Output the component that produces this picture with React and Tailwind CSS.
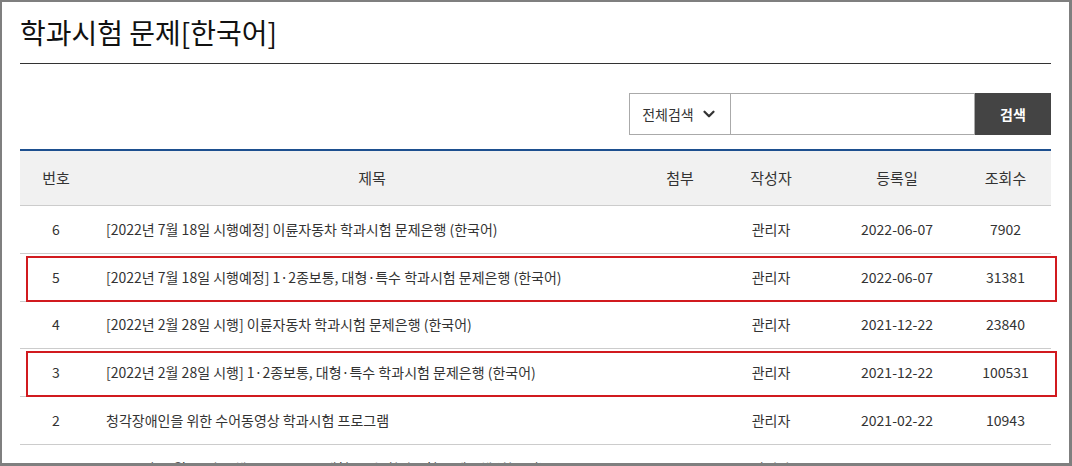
import React from "react";
import { ChevronDown } from "lucide-react";

const rows = [
  { no: 6, title: "[2022년 7월 18일 시행예정] 이륜자동차 학과시험 문제은행 (한국어)", date: "2022-06-07", views: "7902" },
  { no: 5, title: "[2022년 7월 18일 시행예정] 1·2종보통, 대형·특수 학과시험 문제은행 (한국어)", date: "2022-06-07", views: "31381", mark: true },
  { no: 4, title: "[2022년 2월 28일 시행] 이륜자동차 학과시험 문제은행 (한국어)", date: "2021-12-22", views: "23840" },
  { no: 3, title: "[2022년 2월 28일 시행] 1·2종보통, 대형·특수 학과시험 문제은행 (한국어)", date: "2021-12-22", views: "100531", mark: true },
  { no: 2, title: "청각장애인을 위한 수어동영상 학과시험 프로그램", date: "2021-02-22", views: "10943" },
  { no: 1, title: "[2020년 12월 10일 시행] 1·2종보통, 대형·특수 학과시험 문제은행 (한국어)", date: "2020-12-10", views: "98213" },
];

const cols = "grid grid-cols-[72px_560px_56px_126px_126px_91px]";

export default function App() {
  return (
    <div
      className="w-[1072px] h-[466px] overflow-hidden bg-white border-[#7f7f7f] border-t-2 border-l-2 border-r-[3px] border-b-[3px] text-[#333]"
      style={{ fontFamily: '"Noto Sans CJK KR", "Noto Sans", sans-serif' }}
    >
      <div className="pl-[18px] pr-[18px] pt-[12px]">
        {/* title */}
        <h1 className="text-[28px] leading-[36px] text-[#111] pb-[13px] border-b border-[#333]">
          학과시험 문제[한국어]
        </h1>

        {/* search */}
        <div className="flex justify-end mt-[29px] h-[42px]">
          <div className="w-[102px] flex items-center justify-center gap-[6px] border border-[#aaa] text-[14px] text-[#333]">
            전체검색
            <ChevronDown size={18} strokeWidth={3} className="text-[#333]" />
          </div>
          <div className="w-[244px] border-y border-r border-[#aaa]" />
          <button className="w-[76px] bg-[#444] text-white text-[14px] font-bold">검색</button>
        </div>

        {/* table */}
        <div className="mt-[14px] border-t-2 border-[#1d4f8f]">
          <div className={`${cols} h-[55px] items-center bg-[#f1f1f1] border-b border-[#ccc] text-[15px] text-[#333] text-center`}>
            <div>번호</div>
            <div>제목</div>
            <div>첨부</div>
            <div>작성자</div>
            <div>등록일</div>
            <div>조회수</div>
          </div>
          {rows.map((r) => (
            <div
              key={r.no}
              className={`${cols} relative h-[47.75px] items-center border-b border-[#ccc] text-[14px] text-[#333] text-center`}
            >
              <div>{r.no}</div>
              <div className="text-left pl-[14px] whitespace-nowrap">{r.title}</div>
              <div></div>
              <div>관리자</div>
              <div>{r.date}</div>
              <div>{r.views}</div>
              {r.mark && (
                <div className="absolute left-[6px] right-[-6px] top-[2px] bottom-[-1px] border-2 border-[#d11a1f]" />
              )}
            </div>
          ))}
        </div>
      </div>
    </div>
  );
}
